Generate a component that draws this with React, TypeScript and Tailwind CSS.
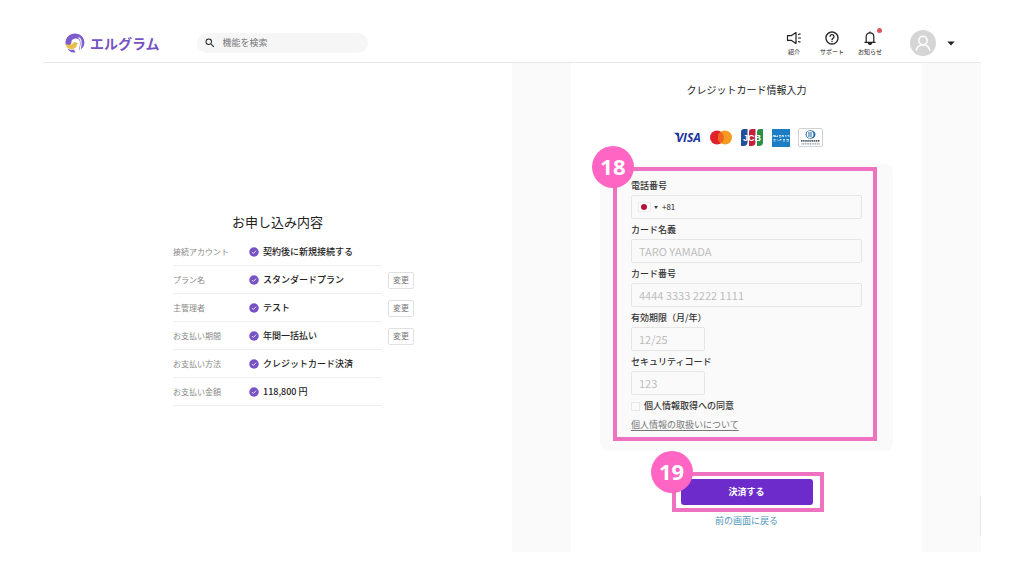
import type { ReactNode } from "react";
import { MdHelpOutline, MdSearch } from "react-icons/md";

type Row = { label: string; value: string; editable?: boolean };

const rows: Row[] = [
    { label: "接続アカウント", value: "契約後に新規接続する" },
    { label: "プラン名", value: "スタンダードプラン", editable: true },
    { label: "主管理者", value: "テスト", editable: true },
    { label: "お支払い期間", value: "年間一括払い", editable: true },
    { label: "お支払い方法", value: "クレジットカード決済" },
    { label: "お支払い金額", value: "118,800 円" },
];

const Logo = () => (
    <svg viewBox="0 0 40 40" className="size-5 shrink-0" aria-hidden="true">
        <path d="M20 1C9 1 1 9 1 20c0 2 .3 3 .8 4h8c2-1 3-3 3-6 0-4 4-7 9-7 8 0 9 7 8 13l-2 11c7-3 11-9 11-15C39 9 31 1 20 1z" fill="#7c5cc9" />
        <path d="M27 9c5 3 6 9 5 15l-2 10" fill="none" stroke="#fff" strokeWidth="2.400" />
        <path d="M1 22c5 2 11 2 15-1 1-3 4-4 7-2 1 1 3 1 4 2l-3 1c0 6-5 10-11 10C7 32 2 28 1 22z" fill="#e8bd4b" />
        <path d="M5 31c4 3 8 3 13 2l3 6C14 40 8 37 5 31z" fill="#7c5cc9" />
    </svg>
);

const SpeakerIcon = () => (
    <svg viewBox="0 0 16 16" className="size-4" fill="none" stroke="#222" strokeWidth="1.200" aria-hidden="true">
        <path d="M10 2.600v10.800L5.500 10.400H1.500V5.600h4z" strokeLinejoin="round" />
        <path d="M12 4.500l2.500-.6M12 8h3M12 11.500l2.500.6" />
    </svg>
);

const BellIcon = () => (
    <svg viewBox="0 0 16 16" className="size-4" fill="none" stroke="#222" strokeWidth="1.200" aria-hidden="true">
        <path d="M4.200 12V6.800C4.200 4.400 5.800 2.800 8 2.800s3.800 1.600 3.800 4V12" />
        <path d="M2.500 12.300h11M8 2.800V1.400" />
        <path d="M6.600 13.500a1.500 1.500 0 0 0 2.800 0z" fill="#222" />
    </svg>
);

const CheckBadge = () => (
    <svg viewBox="0 0 20 20" className="size-[10px] shrink-0" aria-hidden="true">
        <circle cx="10" cy="10" r="9.500" fill="#7553c4" />
        <path d="M6 10.200l2.800 2.800L14 7.500" fill="none" stroke="#fff" strokeWidth="1.700" />
    </svg>
);

const NavItem = ({ label, children, dot }: { label: string; children: ReactNode; dot?: boolean }) => (
    <a href="#" className="flex w-[38px] flex-col items-center gap-[2px] text-[#222]">
        <span className="relative">
            {children}
            {dot && <span className="absolute -top-[2px] -right-[4px] size-[5px] rounded-full bg-[#e0525c]" />}
        </span>
        <span className="text-[6px] leading-[8px] whitespace-nowrap">{label}</span>
    </a>
);

const CardBrands = () => (
    <div className="mt-[30px] flex h-[19px] items-center justify-center gap-2 pl-1">
        <svg viewBox="0 0 28 19" className="h-[19px] w-7" role="img" aria-label="VISA">
            <path d="M0 4.800h4l1.500 5z" fill="#1a35a0" />
            <text x="2" y="14" fontSize="12" fontWeight="700" fontStyle="italic" fontFamily="Open Sans, sans-serif" fill="#1a35a0">
                VISA
            </text>
        </svg>
        <svg viewBox="0 0 22 19" className="h-[19px] w-[22px]" aria-label="Mastercard" role="img">
            <circle cx="7" cy="9.500" r="7" fill="#e0222a" />
            <circle cx="15" cy="9.500" r="7" fill="#f59b22" />
            <path d="M11 3.800a7 7 0 0 1 0 11.400a7 7 0 0 1 0-11.400z" fill="#f26322" />
        </svg>
        <svg viewBox="0 0 24 19" className="h-[19px] w-6" role="img" aria-label="JCB">
            <path d="M4 1h3.500v13a4 4 0 0 1-4 4H1V4a3 3 0 0 1 3-3z" fill="#23509b" />
            <path d="M12 1h3.500v13a4 4 0 0 1-4 4H9V4a3 3 0 0 1 3-3z" fill="#c4203c" />
            <path d="M20 1h3v13a4 4 0 0 1-4 4h-2V4a3 3 0 0 1 3-3z" fill="#2c8f48" />
            <text x="3" y="12.500" fontSize="9" fontWeight="700" fontFamily="Liberation Sans, sans-serif" fill="#fff">
                JCB
            </text>
        </svg>
        <svg viewBox="0 0 18 18" className="size-[18px]" role="img" aria-label="American Express">
            <path d="M0 0h18v18H0z" fill="#1c7cc4" />
            <path d="M1 8V6.500h1.500V8M3.500 8V6.500l1 1 1-1V8M7 6.500h2M7 8h2M10 8V6.500h1.500V8M13 6.500h1V8M15.500 6.500h1.500V8M1.500 10.500h2M1.500 12h2M5 10.500l1.500 1.500M8 12v-1.500h1.500M11 10.500h2M11 12h2M14.500 10.500h2.500M14.500 12h2.500" fill="none" stroke="#d4e9f7" strokeWidth=".9" />
        </svg>
        <svg viewBox="0 0 25 19" className="h-[19px] w-[25px]" role="img" aria-label="Diners Club">
            <rect x=".5" y=".5" width="24" height="18" rx="1.500" fill="#fff" stroke="#cfd3d6" />
            <ellipse cx="12.500" cy="6.500" rx="5" ry="4.200" fill="#2a6ea8" />
            <circle cx="12" cy="6.500" r="3.400" fill="#fff" />
            <path d="M11 4v5M13 4v5" stroke="#2a6ea8" strokeWidth="1.100" />
            <path d="M3 12.800h19" stroke="#4a5966" strokeWidth="1.800" strokeDasharray="1.500 .6" />
            <path d="M3.500 15.800h18" stroke="#7d8790" strokeWidth="1.200" strokeDasharray="1 .7" />
        </svg>
    </div>
);

const inputClass =
    "h-6 rounded-[2px] border border-[#e6e6e6] bg-[#fafafa] px-[7px] text-[11px] text-[#333] placeholder:text-[#bdbdbd] outline-none";

const Field = ({ id, label, placeholder, short }: { id: string; label: string; placeholder: string; short?: boolean }) => (
    <div className="flex flex-col items-start gap-px">
        <label htmlFor={id} className="text-[9px] leading-4 font-medium text-[#333]">
            {label}
        </label>
        <input id={id} type="text" placeholder={placeholder} className={`${inputClass} ${short ? "w-[74px]" : "w-full"}`} />
    </div>
);

// Numbered step marker that sits on the corner of a highlight frame
const StepMarker = ({ step }: { step: number }) => (
    <span className="absolute -top-[25px] -left-[25px] flex size-[42px] items-center justify-center rounded-full bg-[#ff66c4] pb-[3px] font-['Open_Sans',sans-serif] text-[22px] leading-none font-bold text-white">
        {step}
    </span>
);

export default function App() {
    return (
        <div className="min-h-screen bg-white px-[43px] font-['Noto_Sans_CJK_JP',sans-serif] text-[#222]">
            <header className="flex h-[63px] items-center border-b border-[#e8e8e8] pt-6 pr-[26px] pl-[22px]">
                <a href="#" className="flex items-center gap-[5px]">
                    <Logo />
                    <span className="text-[14px] leading-5 font-bold text-[#7553c4]">エルグラム</span>
                </a>
                <label className="ml-[37px] flex h-5 w-[171px] items-center gap-1 rounded-full bg-[#f6f6f6] px-[7px]">
                    <MdSearch size={12} className="shrink-0" />
                    <input
                        type="search"
                        aria-label="機能を検索"
                        placeholder="機能を検索"
                        className="w-full min-w-0 bg-transparent px-[3px] text-[9px] outline-none placeholder:text-[#777]"
                    />
                </label>
                <nav className="ml-auto flex items-center">
                    <NavItem label="紹介">
                        <SpeakerIcon />
                    </NavItem>
                    <NavItem label="サポート">
                        <MdHelpOutline size={16} />
                    </NavItem>
                    <NavItem label="お知らせ" dot>
                        <BellIcon />
                    </NavItem>
                </nav>
                <button type="button" aria-label="アカウント" className="ml-[21px] flex items-center gap-[11px]">
                    <svg viewBox="0 0 26 26" className="size-[26px]" aria-hidden="true">
                        <circle cx="13" cy="13" r="13" fill="#d5d5d5" />
                        <g fill="none" stroke="#fff" strokeWidth="1.500">
                            <circle cx="13" cy="10.500" r="4.200" />
                            <path d="M6.200 20.500c.8-3.600 3.400-5.800 6.800-5.800s6 2.200 6.800 5.800" />
                        </g>
                    </svg>
                    <svg viewBox="0 0 8 5" className="h-[5px] w-2" aria-hidden="true">
                        <path d="M.3.500h7.400L4 4.500z" fill="#222" />
                    </svg>
                </button>
            </header>

            <main className="relative flex">
                <section className="flex flex-1 flex-col items-center pt-[149px]">
                    <h1 className="mb-[6px] text-[13px] leading-5">お申し込み内容</h1>
                    <dl className="w-[209px]">
                        {rows.map((row) => (
                            <div key={row.label} className="flex h-7 items-center gap-[6px]">
                                <div className="flex h-full w-full shrink-0 items-center border-b border-[#efefef]">
                                    <dt className="w-[76px] text-[8px] text-[#888]">{row.label}</dt>
                                    <dd className="flex items-center gap-1 text-[9px] font-medium whitespace-nowrap">
                                        <CheckBadge />
                                        {row.value}
                                    </dd>
                                </div>
                                {row.editable && (
                                    <button
                                        type="button"
                                        className="h-[17px] w-[26px] shrink-0 rounded-[2px] border border-[#e0e0e0] text-[8px] leading-none text-[#777]"
                                    >
                                        変更
                                    </button>
                                )}
                            </div>
                        ))}
                    </dl>
                </section>

                <section className="flex flex-1 justify-center bg-[#fafafa]">
                    <form className="flex w-3/4 flex-col items-center bg-white pt-[19px] pb-[23px]">
                        <h2 className="text-[10px] leading-4">クレジットカード情報入力</h2>
                        <CardBrands />

                        <div className="relative mt-[17px] flex w-5/6 flex-col gap-[3px] rounded-lg bg-[#fafafa] px-[31px] pt-[14px] pb-[18px]">
                            <div className="flex flex-col gap-px">
                                <label htmlFor="tel" className="text-[9px] leading-4 font-medium text-[#333]">
                                    電話番号
                                </label>
                                <div className="flex h-6 items-center rounded-[2px] border border-[#e6e6e6] px-[6px]">
                                    <button type="button" aria-label="国を選択" className="flex items-center gap-[3px]">
                                        <span className="flex h-[10px] w-[13px] items-center justify-center border border-[#eee] bg-white">
                                            <span className="size-[6px] rounded-full bg-[#b5123b]" />
                                        </span>
                                        <svg viewBox="0 0 4 3" className="h-[3px] w-1" aria-hidden="true">
                                            <path d="M0 0h4L2 3z" fill="#444" />
                                        </svg>
                                    </button>
                                    <input id="tel" type="tel" defaultValue="+81" className="ml-1 w-full min-w-0 bg-transparent text-[8px] outline-none" />
                                </div>
                            </div>
                            <Field id="name" label="カード名義" placeholder="TARO YAMADA" />
                            <Field id="number" label="カード番号" placeholder="4444 3333 2222 1111" />
                            <Field id="expiry" label="有効期限（月/年）" placeholder="12/25" short />
                            <Field id="cvc" label="セキュリティコード" placeholder="123" short />
                            <label className="flex h-4 items-center gap-1 text-[9px] font-medium text-[#333]">
                                <input type="checkbox" className="size-[9px] appearance-none border border-[#e8e8e8] checked:bg-[#7553c4]" />
                                個人情報取得への同意
                            </label>
                            <a href="#" className="self-start text-[9px] leading-4 text-[#777] underline underline-offset-2">
                                個人情報の取扱いについて
                            </a>
                            <div className="pointer-events-none absolute top-[3px] right-4 bottom-[10px] left-[13px] border-4 border-[#ee72bf]">
                                <StepMarker step={18} />
                            </div>
                        </div>

                        <div className="relative mt-7">
                            <button type="submit" className="block h-[26px] w-[132px] rounded-[3px] bg-[#6d2bcb] text-[9px] font-bold text-white">
                                決済する
                            </button>
                            <div className="pointer-events-none absolute -top-[7px] -right-[11px] -bottom-[7px] -left-[9px] border-4 border-[#ee72bf]">
                                <StepMarker step={19} />
                            </div>
                        </div>
                        <a href="#" className="mt-2 text-[9px] leading-4 text-[#4f97bd]">
                            前の画面に戻る
                        </a>
                    </form>
                </section>
                <span className="absolute right-0 bottom-4 h-10 w-px bg-[#e6e6e6]" />
            </main>
        </div>
    );
}
